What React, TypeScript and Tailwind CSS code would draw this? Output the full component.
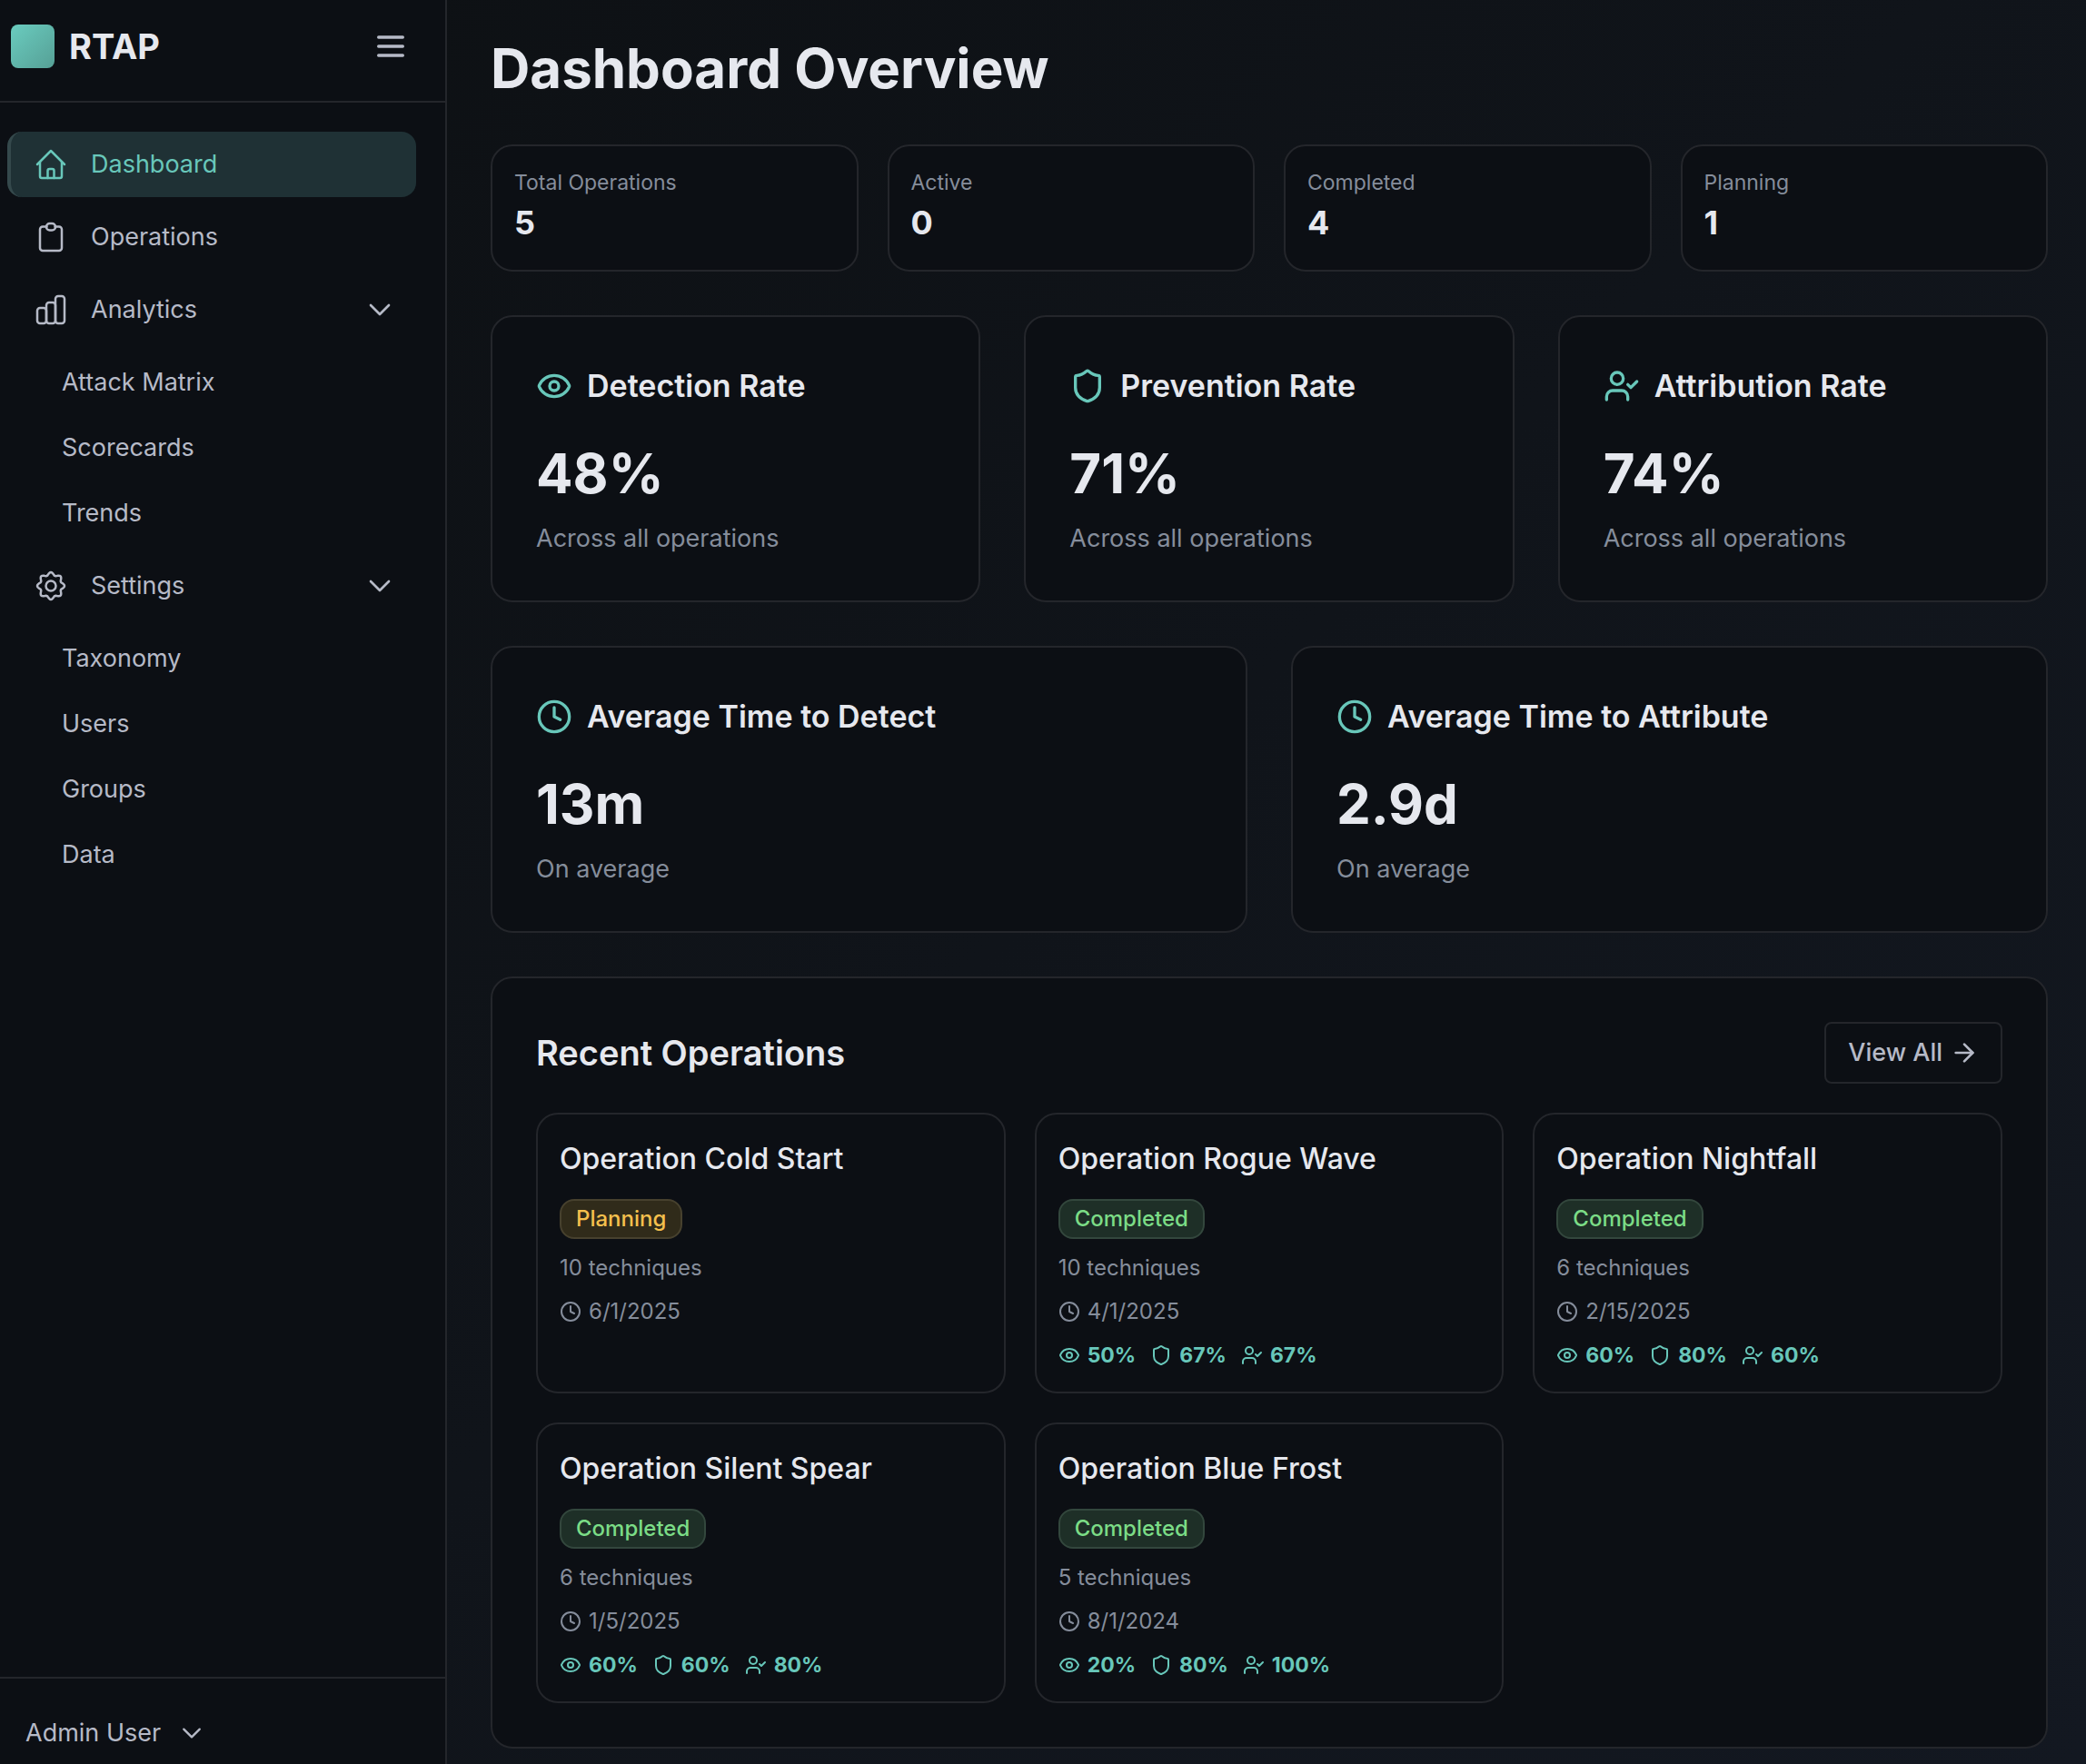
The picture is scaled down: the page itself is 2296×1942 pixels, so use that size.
import type { ReactNode } from "react";
import { ArrowRight, Clock, Eye, Shield, UserCheck } from "lucide-react";

const gearPath =
  Array.from({ length: 96 }, (_, i) => {
    const a = (i / 96) * Math.PI * 2;
    const r = 13.4 + 1.6 * Math.cos(8 * a);
    return `${i === 0 ? "M" : "L"}${(20 + r * Math.cos(a)).toFixed(2)} ${(20 + r * Math.sin(a)).toFixed(2)}`;
  }).join("") + "Z";

function NavIcon({ children }: { children: ReactNode }) {
  return (
    <svg
      viewBox="0 0 40 40"
      className="size-10 shrink-0"
      fill="none"
      stroke="currentColor"
      strokeWidth="2.5"
      strokeLinecap="round"
      strokeLinejoin="round"
      aria-hidden="true"
    >
      {children}
    </svg>
  );
}

const HomeIcon = () => (
  <NavIcon>
    <path d="M5 20 20 5l15 15" />
    <path d="M8 17.5V33a2 2 0 0 0 2 2h20a2 2 0 0 0 2-2V17.5" />
    <path d="M16.5 35v-8a2 2 0 0 1 2-2h3a2 2 0 0 1 2 2v8" />
  </NavIcon>
);

const ClipboardIcon = () => (
  <NavIcon>
    <path d="M15.500 8.500H11a3 3 0 0 0-3 3V32a3 3 0 0 0 3 3h18a3 3 0 0 0 3-3V11.500a3 3 0 0 0-3-3h-4.500" />
    <rect x="15" y="5" width="10" height="7.500" rx="3.750" />
  </NavIcon>
);

const BarsIcon = () => (
  <NavIcon>
    <rect x="5" y="18" width="10" height="17" rx="3" />
    <rect x="15" y="12" width="10" height="23" rx="3" />
    <rect x="25" y="5" width="10" height="30" rx="3" />
  </NavIcon>
);

const GearIcon = () => (
  <NavIcon>
    <path d={gearPath} />
    <circle cx="20" cy="20" r="5.500" />
  </NavIcon>
);

function Chevron({ className }: { className: string }) {
  return (
    <svg
      viewBox="0 0 24 24"
      className={className}
      fill="none"
      stroke="currentColor"
      strokeWidth="2"
      strokeLinecap="round"
      strokeLinejoin="round"
      aria-hidden="true"
    >
      <path d="m19.500 8.250-7.500 7.500-7.500-7.500" />
    </svg>
  );
}

function NavLink({ icon, label, active }: { icon: ReactNode; label: string; active?: boolean }) {
  return (
    <a
      href="#"
      aria-current={active ? "page" : undefined}
      className={
        active
          ? "flex h-18 items-center gap-6 rounded-2xl border-l-4 border-[#35494c] bg-[#1f3135] px-6 text-[#68c7ba]"
          : "flex h-18 items-center gap-6 rounded-2xl border-l-4 border-transparent px-6"
      }
    >
      {icon}
      {label}
    </a>
  );
}

function NavGroup({ icon, label, items }: { icon: ReactNode; label: string; items: string[] }) {
  return (
    <>
      <button
        type="button"
        aria-expanded="true"
        className="flex h-18 items-center gap-6 rounded-2xl border-l-4 border-transparent px-6"
      >
        {icon}
        <span className="flex-1 text-left">{label}</span>
        <Chevron className="size-8" />
      </button>
      <ul>
        {items.map((item) => (
          <li key={item}>
            <a href="#" className="flex h-18 items-center pl-15">
              {item}
            </a>
          </li>
        ))}
      </ul>
    </>
  );
}

function Stat({ label, value }: { label: string; value: string }) {
  return (
    <div className="rounded-3xl border-2 border-[#24262b] bg-[#0c0f14] p-6">
      <p className="text-[23px] leading-8 text-[#858d9b]">{label}</p>
      <p className="text-4xl leading-14 font-bold">{value}</p>
    </div>
  );
}

function Metric({ icon: Icon, title, value, note }: { icon: typeof Eye; title: string; value: string; note: string }) {
  return (
    <section className="rounded-3xl border-2 border-[#24262b] bg-[#0c0f14] p-12">
      <div className="flex items-center gap-4">
        <Icon className="size-10 text-[#68c7ba]" />
        <h2 className="text-[34px] leading-14 font-semibold">{title}</h2>
      </div>
      <p className="mt-8 text-6xl leading-18 font-bold">{value}</p>
      <p className="mt-4 text-[27px] leading-10 text-[#858d9b]">{note}</p>
    </section>
  );
}

type Operation = {
  name: string;
  status: "Planning" | "Completed";
  techniques: number;
  date: string;
  rates?: [string, string, string];
};

const operations: Operation[] = [
  { name: "Operation Cold Start", status: "Planning", techniques: 10, date: "6/1/2025" },
  { name: "Operation Rogue Wave", status: "Completed", techniques: 10, date: "4/1/2025", rates: ["50%", "67%", "67%"] },
  { name: "Operation Nightfall", status: "Completed", techniques: 6, date: "2/15/2025", rates: ["60%", "80%", "60%"] },
  { name: "Operation Silent Spear", status: "Completed", techniques: 6, date: "1/5/2025", rates: ["60%", "60%", "80%"] },
  { name: "Operation Blue Frost", status: "Completed", techniques: 5, date: "8/1/2024", rates: ["20%", "80%", "100%"] },
];

const rateIcons = [Eye, Shield, UserCheck];

function OperationCard({ op }: { op: Operation }) {
  return (
    <article className="flex flex-col items-start gap-4 rounded-3xl border-2 border-[#24262b] p-6 text-2xl leading-8 text-[#858d9b]">
      <h3 className="pb-[3px] text-[32px] leading-[50px] font-medium text-[#e6e8ee]">{op.name}</h3>
      <span
        className={
          op.status === "Planning"
            ? "flex h-11 items-center rounded-2xl border-2 border-[#47412e] bg-[#302b1a] px-4 font-medium text-[#f5c04d]"
            : "flex h-11 items-center rounded-2xl border-2 border-[#33473d] bg-[#1e2f27] px-4 font-medium text-[#7bdc86]"
        }
      >
        {op.status}
      </span>
      <p>{op.techniques} techniques</p>
      <p className="flex items-center gap-2">
        <Clock className="size-6" />
        {op.date}
      </p>
      {op.rates && (
        <div className="flex gap-4 text-[23px] font-bold text-[#68c7ba]">
          {op.rates.map((rate, i) => {
            const Icon = rateIcons[i];
            return (
              <span key={i} className="flex items-center gap-2">
                <Icon className="size-6" />
                {rate}
              </span>
            );
          })}
        </div>
      )}
    </article>
  );
}

export default function App() {
  return (
    <div className="flex h-screen bg-linear-135 from-[#0d1013] to-[#131821] font-['Inter',sans-serif] text-[#e6e8ee]">
      <aside className="flex w-[492px] shrink-0 flex-col border-r-2 border-[#24262b] bg-[#0c0f14] text-[27px] text-[#b6bac7]">
        <div className="flex h-[113px] items-start justify-between border-b-2 border-[#24262b] pt-[27px] pr-10 pl-3">
          <div className="flex h-12 items-center gap-4">
            <div className="size-12 rounded-lg bg-linear-135 from-[#6accbf] to-[#56a096]" />
            <span className="text-[38px] leading-12 font-bold text-[#e6e8ee]">RTAP</span>
          </div>
          <button type="button" aria-label="Toggle menu" className="flex h-12 items-center">
            <svg viewBox="0 0 24 24" className="size-10" fill="none" stroke="currentColor" strokeWidth="2" strokeLinecap="round">
              <path d="M4 6h16M4 12h16M4 18h16" />
            </svg>
          </button>
        </div>
        <nav className="flex flex-1 flex-col gap-2 py-8 pr-8 pl-2">
          <NavLink icon={<HomeIcon />} label="Dashboard" active />
          <NavLink icon={<ClipboardIcon />} label="Operations" />
          <NavGroup icon={<BarsIcon />} label="Analytics" items={["Attack Matrix", "Scorecards", "Trends"]} />
          <NavGroup icon={<GearIcon />} label="Settings" items={["Taxonomy", "Users", "Groups", "Data"]} />
        </nav>
        <div className="flex h-24 items-end border-t-2 border-[#24262b] px-7 pb-3">
          <button type="button" className="flex items-center gap-5 leading-11">
            Admin User
            <Chevron className="size-7" />
          </button>
        </div>
      </aside>

      <main className="flex min-w-0 flex-1 flex-col gap-12 overflow-hidden pt-10 pr-[42px] pl-12">
        <h1 className="text-6xl leading-[71px] font-bold">Dashboard Overview</h1>
        <div className="grid grid-cols-4 gap-8">
          <Stat label="Total Operations" value="5" />
          <Stat label="Active" value="0" />
          <Stat label="Completed" value="4" />
          <Stat label="Planning" value="1" />
        </div>
        <div className="grid grid-cols-3 gap-12">
          <Metric icon={Eye} title="Detection Rate" value="48%" note="Across all operations" />
          <Metric icon={Shield} title="Prevention Rate" value="71%" note="Across all operations" />
          <Metric icon={UserCheck} title="Attribution Rate" value="74%" note="Across all operations" />
        </div>
        <div className="grid grid-cols-2 gap-12">
          <Metric icon={Clock} title="Average Time to Detect" value="13m" note="On average" />
          <Metric icon={Clock} title="Average Time to Attribute" value="2.9d" note="On average" />
        </div>
        <section className="rounded-3xl border-2 border-[#24262b] bg-[#0c0f14] p-12">
          <div className="flex items-center justify-between">
            <h2 className="text-[38px] leading-14 font-semibold">Recent Operations</h2>
            <a
              href="#"
              className="flex h-17 items-center gap-2 rounded-lg border-2 border-[#24262b] px-6 text-[27px] font-medium text-[#b6bac7]"
            >
              View All
              <ArrowRight className="size-8" />
            </a>
          </div>
          <div className="mt-8 grid grid-cols-3 gap-8">
            {operations.map((op) => (
              <OperationCard key={op.name} op={op} />
            ))}
          </div>
        </section>
      </main>
    </div>
  );
}
